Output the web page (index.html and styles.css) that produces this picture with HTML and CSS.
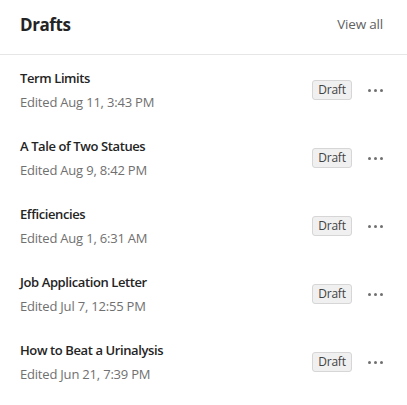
FILE: index.html
```html
<!DOCTYPE html>
<html>
<head>
    <meta charset="utf-8">
    <title>Drafts</title>
    <link rel="stylesheet" href="styles.css">
</head>
<body>
    <div class="panel">
        <div class="panelHeader">
            <h2>Drafts</h2>
            <a class="viewAll" href="#">View all</a>
        </div>
        <ul class="draftList">
            <li class="draftRow">
                <div class="draftText">
                    <div class="draftTitle">Term Limits</div>
                    <div class="draftMeta">Edited Aug 11, 3:43 PM</div>
                </div>
                <span class="badge">Draft</span>
                <span class="more"><i></i><i></i><i></i></span>
            </li>
            <li class="draftRow">
                <div class="draftText">
                    <div class="draftTitle">A Tale of Two Statues</div>
                    <div class="draftMeta">Edited Aug 9, 8:42 PM</div>
                </div>
                <span class="badge">Draft</span>
                <span class="more"><i></i><i></i><i></i></span>
            </li>
            <li class="draftRow">
                <div class="draftText">
                    <div class="draftTitle">Efficiencies</div>
                    <div class="draftMeta">Edited Aug 1, 6:31 AM</div>
                </div>
                <span class="badge">Draft</span>
                <span class="more"><i></i><i></i><i></i></span>
            </li>
            <li class="draftRow">
                <div class="draftText">
                    <div class="draftTitle">Job Application Letter</div>
                    <div class="draftMeta">Edited Jul 7, 12:55 PM</div>
                </div>
                <span class="badge">Draft</span>
                <span class="more"><i></i><i></i><i></i></span>
            </li>
            <li class="draftRow">
                <div class="draftText">
                    <div class="draftTitle">How to Beat a Urinalysis</div>
                    <div class="draftMeta">Edited Jun 21, 7:39 PM</div>
                </div>
                <span class="badge">Draft</span>
                <span class="more"><i></i><i></i><i></i></span>
            </li>
        </ul>
    </div>
</body>
</html>
```

FILE: styles.css
```css
body {
    margin: 0;
    background-color: #ffffff;
    font-family: 'Open Sans', 'Noto Sans', sans-serif;
    color: #242424;
}

.panelHeader {
    display: flex;
    justify-content: space-between;
    align-items: center;
    height: 48px;
    padding: 0 24px 6px 20px;
    border-bottom: 1px solid #e6e6e6;
}
.panelHeader h2 {
    margin: 0;
    font-size: 17px;
    font-weight: 700;
    letter-spacing: -0.4px;
    color: #242424;
}
.viewAll {
    font-size: 13.5px;
    letter-spacing: -0.2px;
    color: #616161;
    text-decoration: none;
}

.draftList {
    list-style: none;
    margin: 0;
    padding: 0;
}
.draftRow {
    box-sizing: border-box;
    display: flex;
    align-items: center;
    height: 68px;
    padding: 2px 24px 0 20px;
}
.draftText {
    flex: 1;
    display: flex;
    flex-direction: column;
    gap: 4px;
}
.draftTitle {
    font-size: 13px;
    font-weight: 600;
    letter-spacing: -0.4px;
    line-height: 20px;
}
.draftMeta {
    font-size: 13px;
    letter-spacing: -0.2px;
    line-height: 20px;
    color: #707070;
}

.badge {
    box-sizing: border-box;
    width: 40px;
    height: 20px;
    line-height: 18px;
    text-align: center;
    font-size: 12px;
    letter-spacing: -0.2px;
    color: #424242;
    background-color: #f0f0f0;
    border: 1px solid #d6d6d6;
    border-radius: 3px;
}
.more {
    display: flex;
    gap: 3px;
    margin-left: 16px;
    width: 15px;
}
.more i {
    width: 3px;
    height: 3px;
    border-radius: 50%;
    background-color: #707070;
}
```
